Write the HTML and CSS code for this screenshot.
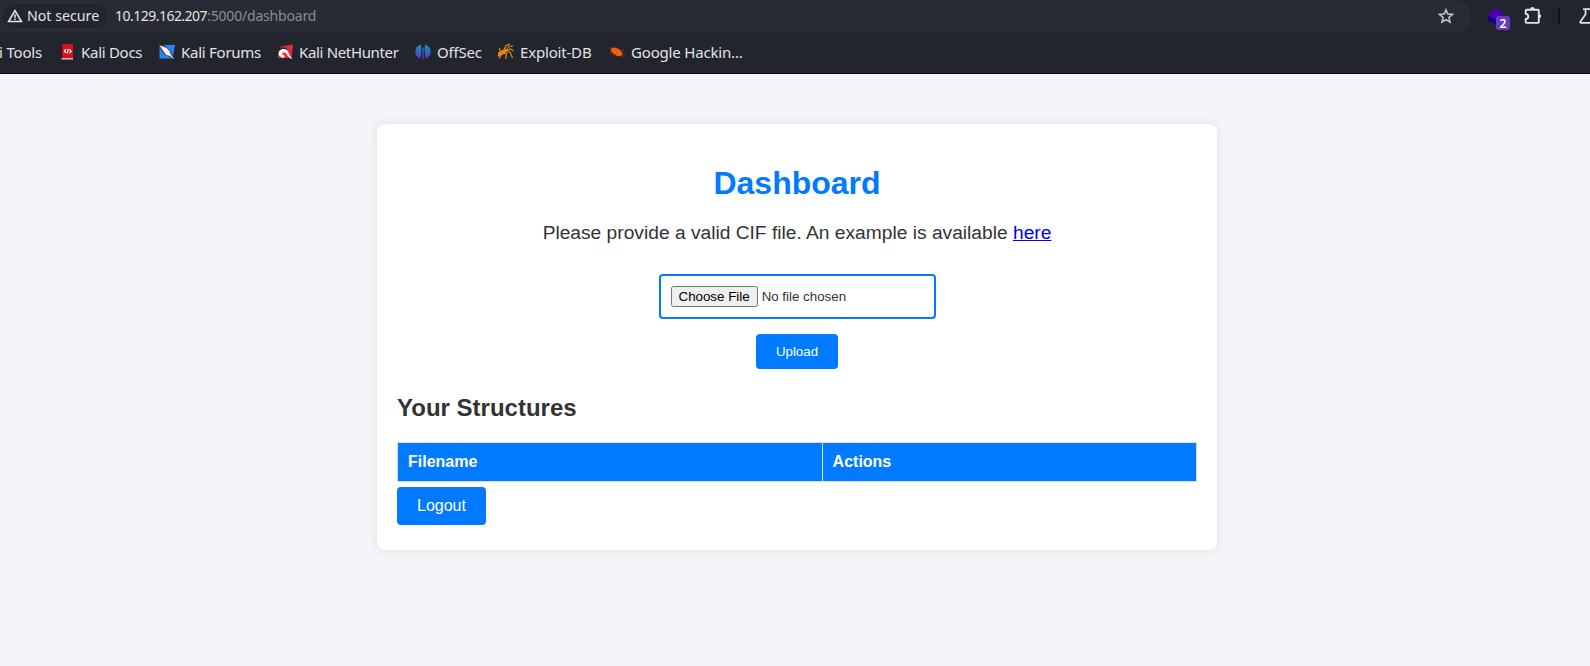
FILE: index.html
```html
<!DOCTYPE html>
<html lang="en">
<head>
<meta charset="utf-8">
<title>Dashboard</title>
<link rel="stylesheet" href="styles.css">
</head>
<body>
<header class="browser">
  <div class="toolbar">
    <div class="omnibox">
      <div class="security">
        <svg width="16" height="14" viewBox="0 0 16 14"><path d="M8 1.6 14.4 12.5H1.6Z" fill="none" stroke="#e3e3e3" stroke-width="1.6"/><path d="M8 5.2v3.6M8 9.6v1.5" stroke="#e3e3e3" stroke-width="1.5"/></svg>
        <span class="security-text">Not secure</span>
      </div>
      <div class="url"><span class="host">10.129.162.207</span>:5000/dashboard</div>
      <svg class="star" width="18" height="18" viewBox="0 0 18 18"><path d="M9 2.700l1.800 4.300 4.700.4-3.600 3.100 1.100 4.600L9 12.600l-4 2.500 1.100-4.600-3.600-3.100L7.200 7z" fill="none" stroke="#c3c3c6" stroke-width="1.600"/></svg>
    </div>
    <div class="extension">
      <svg width="22" height="24" viewBox="0 0 22 24"><path d="M0 13.500V9h16v4.500L8 17z" fill="#14007c"/><path d="M0 7.500 8 1l8 6.500L8 13z" fill="#4a00b4"/></svg>
      <span class="badge">2</span>
    </div>
    <svg class="puzzle" width="18" height="18" viewBox="0 0 18 18"><path d="M2.500 2.800H14q.8 0 .8.800v11.500q0 .8-.8.800H2.500q-.8 0-.8-.8v-3.200c3.400-.1 3.400-4.900 0-5V3.600q0-.8.800-.8z" fill="none" stroke="#e3e3e3" stroke-width="1.900" stroke-linejoin="round"/><path d="M6.200 2.500c0-3.200 4.400-3.200 4.400 0zM15 7c2.900 0 2.900 4 0 4z" fill="#e3e3e3"/></svg>
    <span class="divider"></span>
    <svg class="flask" width="11" height="18" viewBox="0 0 11 18"><path d="M4 2.200h10M6.500 2.500v5L1.300 14.700q-.4 1.100.7 1.100H14" fill="none" stroke="#e3e3e3" stroke-width="1.700"/></svg>
  </div>
  <nav class="bookmarks">
    <span class="bookmark tools">i Tools</span>
    <span class="bookmark docs"><svg width="16" height="18" viewBox="0 0 16 18"><path d="M1 1.500 2.500 1v15L1 15.500z" fill="#3b1035"/><path d="M2.200 1H13v14.500H2.200z" fill="#da1117"/><path d="M1.500 15.200H13v1.300H1.500z" fill="#ddd"/><path d="M5.800 6.200 4.300 8.200l1.500 1.700M9.500 6.500l1.600 1.700-1.600 2M8.400 6 7 10.500" fill="none" stroke="#fff" stroke-width="1.200"/></svg>Kali Docs</span>
    <span class="bookmark forums"><svg width="16" height="18" viewBox="0 0 16 18"><path d="M.5 4 5 2h11l-2.500 13.500H.5z" fill="#2488f8"/><path d="M0 2 5 2 12 8 15 16 6 12 1 6z" fill="#394758"/><path d="M.5 2.500 3.500 3.500 7.500 5l3.200 3.300 1 3.200 3.800 4.700-5-3.500-3.200-.8L4.300 8z" fill="#f1f3f5"/></svg>Kali Forums</span>
    <span class="bookmark hunter"><svg width="16" height="18" viewBox="0 0 16 18"><path d="M1 4 16 1.500l-1.500 13.500H1z" fill="#e42b3b"/><path d="M0 2 4.500 2.500 3 6.500 0 8z" fill="#22252d"/><path d="M1.500 11C2 6 6 4 9.500 6.500" fill="none" stroke="#30232c" stroke-width="2"/><path d="M2 12.500C.2 8.500 4 5.700 7.300 6c4.700.4 4 6.500 8.200 10-5.500-1.200-5-6.300-8-6.600-2.300-.2-3.200 1.800-1.200 2.400l1.500 1.800-2 1.700z" fill="#fff"/></svg>Kali NetHunter</span>
    <span class="bookmark offsec"><svg width="16" height="18" viewBox="0 0 16 18"><defs><linearGradient id="sphere" x2="0" y2="1"><stop stop-color="#1599a5"/><stop offset=".5" stop-color="#3466c4"/><stop offset="1" stop-color="#6529cd"/></linearGradient></defs><path d="M5.800 1.500Q7.200 8 5.200 15.500Q.3 13.500.3 8.500T5.800 1.500zM10.200 1.500Q8.800 8 10.800 15.500q4.900-2 4.900-7T10.200 1.500zM7.400 4.500h1.200V16.500H7.400z" fill="url(#sphere)"/></svg>OffSec</span>
    <span class="bookmark exploit"><svg width="18" height="18" viewBox="0 0 18 18"><path d="M1 9.500 5 7l4-1 1.500 1.500L7 11 2.500 13.500H.8z" fill="#e8820c"/><path d="M7 7 9 2.500 13 1M9 7.500l3-4 4-.5M9.500 8l4-2 3 2M8 9l5 0 2.500 6M6.500 10l3 1-1 5M3 8l-.5-3M4 11l-1.500 4.500" fill="none" stroke="#e08a1e" stroke-width="1.200"/></svg>Exploit-DB</span>
    <span class="bookmark google"><svg width="16" height="18" viewBox="0 0 16 18"><path d="M1.500 6.500q1.500-2.500 4.500-2 4 1.200 6.500 4l1 3-1 1.700q-4.500.5-7.500-2Q2 9.500 1.500 6.500z" fill="#f45d0b"/><path d="M0 4.500 3 6M9 4l.5 2M12 7.500l3-.5M13 10.500h2.500M11.500 12l2 2.500M6 11l-2.500 2M3 9 .5 10" stroke="#8d3519" stroke-width="1"/></svg>Google Hackin…</span>
  </nav>
</header>
<main class="card">
  <h1>Dashboard</h1>
  <p class="intro">Please provide a valid CIF file. An example is available <a href="#">here</a></p>
  <form class="upload">
    <input class="file" type="file">
    <button class="btn" type="button">Upload</button>
  </form>
  <h2>Your Structures</h2>
  <table class="structures">
    <tr><th class="filename">Filename</th><th>Actions</th></tr>
  </table>
  <a class="btn logout">Logout</a>
</main>
</body>
</html>
```

FILE: styles.css
```css
* { box-sizing: border-box; }
body {
  margin: 0;
  min-height: 666px;
  overflow: hidden;
  background: #f4f4f9;
  color: #333;
  font-family: "Liberation Sans", Arial, sans-serif;
}
.browser {
  height: 74px;
  background: #22252d;
  border-bottom: 1px solid #08090c;
  color: #e3e3e3;
  font-family: "Noto Sans", sans-serif;
  overflow: hidden;
}
.toolbar { display: flex; align-items: flex-start; height: 33px; }
.omnibox {
  display: flex;
  align-items: center;
  flex: none;
  width: 1471px;
  height: 33px;
  background: #282a35;
  border-radius: 0 17px 17px 0;
}
.security {
  display: flex;
  align-items: center;
  gap: 4px;
  width: 104px;
  height: 24px;
  margin: 0 0 1px 3px;
  padding-left: 4px;
  border-radius: 12px;
  background: #22252d;
}
.security-text { font-size: 14.2px; line-height: 24px; white-space: nowrap; }
.url { margin-left: 8px; margin-bottom: 1px; font-size: 14px; letter-spacing: -0.18px; line-height: 24px; color: #8b8c92; white-space: nowrap; }
.host { color: #e3e3e3; letter-spacing: -0.52px; }
.star { margin: 0 16px 1px auto; }
.extension { position: relative; flex: none; width: 22px; height: 24px; margin: 7px 0 0 17px; }
.badge {
  position: absolute;
  left: 8px;
  top: 9px;
  width: 14px;
  height: 14px;
  border-radius: 3px;
  background: #6c38bd;
  color: #fff;
  font-size: 12px;
  font-weight: 600;
  line-height: 15px;
  text-align: center;
}
.puzzle { flex: none; margin: 7px 0 0 14px; }
.divider { flex: none; width: 2px; height: 16px; margin: 8px 0 0 16px; background: #111319; }
.flask { flex: none; margin: 7px 0 0 19px; }
.bookmarks { display: flex; align-items: center; height: 40px; white-space: nowrap; font-size: 15px; letter-spacing: -0.18px; }
.bookmark { display: flex; align-items: center; flex: none; height: 24px; margin-bottom: 2px; gap: 5px; }
.bookmark svg { flex: none; }
.tools { width: 61px; margin-left: -1px; }
.docs { width: 99px; letter-spacing: -0.28px; }
.forums { width: 118px; gap: 6px; letter-spacing: -0.26px; }
.hunter { width: 138px; gap: 6px; letter-spacing: -0.34px; }
.offsec { width: 82px; gap: 6px; }
.exploit { width: 112px; }
.google { gap: 6px; }
.card {
  width: 840px;
  height: 426px;
  margin: 50px 373px 0 377px;
  padding: 20px;
  border-radius: 8px;
  background: #fff;
  box-shadow: 0 0 10px rgba(0, 0, 0, 0.1);
}
h1 { margin: 21px 0 20px; font-size: 32px; line-height: 36px; color: #007bff; text-align: center; }
.intro { margin: 0 0 30px; font-size: 19.2px; line-height: 23px; text-align: center; }
.intro a { color: #0000ee; }
.upload { display: flex; flex-direction: column; align-items: center; gap: 15px; }
.file { width: 277px; height: 45px; padding: 10px; border: 2px solid #007bff; border-radius: 4px; font: 13.333px "Liberation Sans", Arial, sans-serif; }
.btn { height: 35px; padding: 10px 20px; border: 0; border-radius: 4px; background: #007bff; color: #fff; font: 13.333px "Liberation Sans", Arial, sans-serif; }
h2 { margin: 25px 0 20px; font-size: 24px; line-height: 28px; }
.structures { width: 100%; height: 40px; border-collapse: collapse; }
.structures th { padding: 10px; border: 1px solid #ddd; background: #007bff; color: #fff; font-size: 16px; line-height: 18px; text-align: left; }
.structures .filename { width: 424.6px; }
.logout { display: inline-block; height: 38px; margin-top: 5px; font-size: 16px; line-height: 18px; }
```
